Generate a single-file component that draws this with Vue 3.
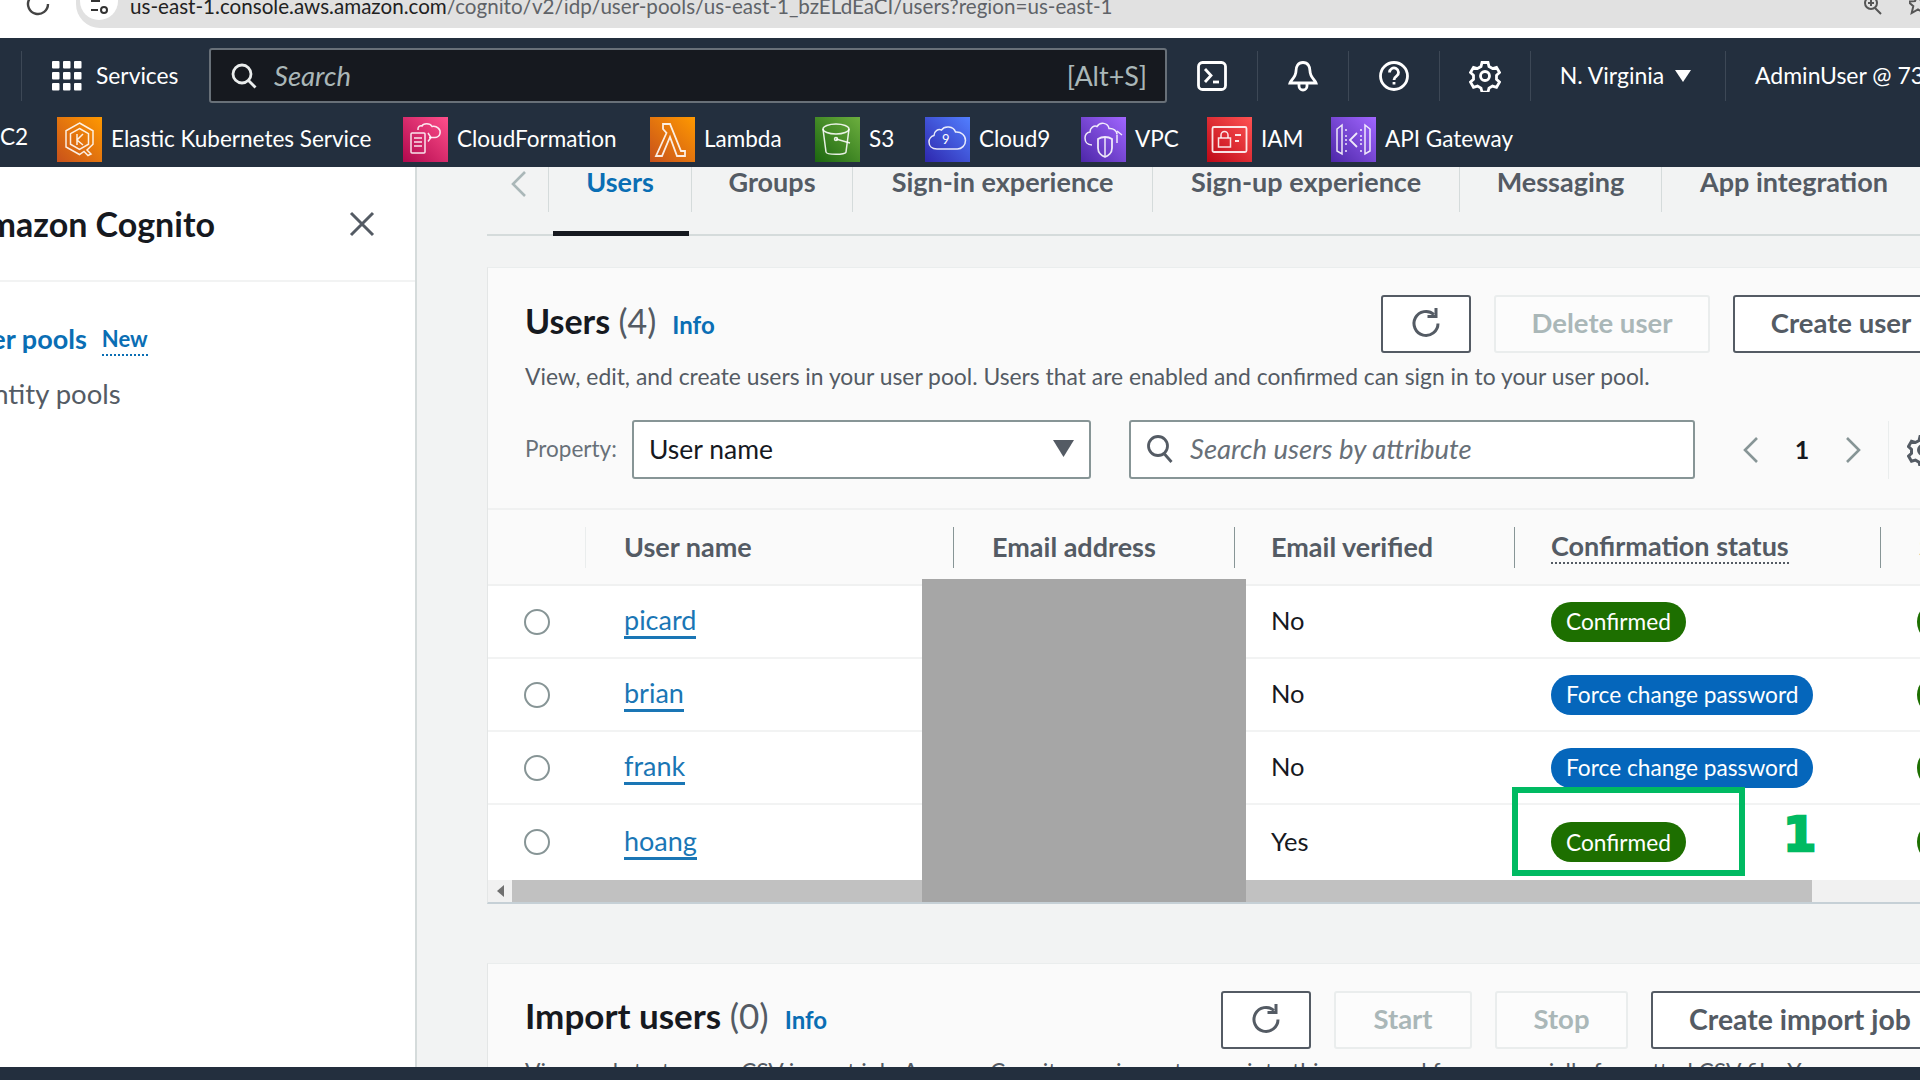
<script setup>
const services = [
  { name: 'Elastic Kubernetes Service', w: 346, c1: '#c8511b', c2: '#ff9900', id: 'eks' },
  { name: 'CloudFormation', w: 247, c1: '#b0084d', c2: '#ff4f8b', id: 'cf' },
  { name: 'Lambda', w: 165, c1: '#c8511b', c2: '#ff9900', id: 'lambda' },
  { name: 'S3', w: 110, c1: '#1b660f', c2: '#6cae3e', id: 's3' },
  { name: 'Cloud9', w: 156, c1: '#2e27ad', c2: '#527fff', id: 'c9' },
  { name: 'VPC', w: 126, c1: '#4d27a8', c2: '#a166ff', id: 'vpc' },
  { name: 'IAM', w: 124, c1: '#bd0816', c2: '#ff5252', id: 'iam' },
  { name: 'API Gateway', w: 180, c1: '#4d27a8', c2: '#a166ff', id: 'api' }
]
const tabs = [
  { name: 'Users', w: 143, active: true },
  { name: 'Groups', w: 161 },
  { name: 'Sign-in experience', w: 300 },
  { name: 'Sign-up experience', w: 307 },
  { name: 'Messaging', w: 202 },
  { name: 'App integration', w: 264 }
]
const users = [
  { name: 'picard', verified: 'No', status: 'Confirmed', kind: 'green' },
  { name: 'brian', verified: 'No', status: 'Force change password', kind: 'blue' },
  { name: 'frank', verified: 'No', status: 'Force change password', kind: 'blue' },
  { name: 'hoang', verified: 'Yes', status: 'Confirmed', kind: 'green' }
]
</script>

<template>
  <div class="page">
    <div class="chrome">
      <svg class="reload" width="24" height="24" viewBox="0 0 24 24" fill="none" stroke="#444" stroke-width="2.4">
        <path d="M22 12a10 10 0 1 1-3.500-7.600" />
        <path d="M20 -3v8h-7" />
      </svg>
      <div class="address">
        <span class="site-ic">
          <svg width="22" height="16" viewBox="0 0 22 16" fill="none" stroke="#333" stroke-width="2">
            <path d="M3 1h9M3 10h7" />
            <circle cx="16" cy="10" r="3" />
          </svg>
        </span>
        <span class="url"><span class="url-host">us-east-1.console.aws.amazon.com</span>/cognito/v2/idp/user-pools/us-east-1_bzELdEaCI/users?region=us-east-1</span>
        <svg class="zoom-ic" width="22" height="16" viewBox="0 0 22 16" fill="none" stroke="#555" stroke-width="2">
          <circle cx="9" cy="3" r="6" /><path d="M13 8l6 6M6 3h6M9 0v6" />
        </svg>
        <svg class="star-ic" width="18" height="16" viewBox="0 0 18 16" fill="none" stroke="#555" stroke-width="2">
          <path d="M9 -6l3 7 7 .6-5.300 4.600 1.600 6.800L9 9.400 2.700 13l1.600-6.800L-1 1.600 6 1z" />
        </svg>
      </div>
    </div>

    <header class="nav">
      <div class="nav-top">
        <span class="nav-sep"></span>
        <svg class="grid-ic" width="30" height="30" viewBox="0 0 30 30" fill="#fff">
          <rect x="0" y="0" width="7.500" height="7.500" rx="1" /><rect x="11" y="0" width="7.500" height="7.500" rx="1" /><rect x="22" y="0" width="7.500" height="7.500" rx="1" />
          <rect x="0" y="11" width="7.500" height="7.500" rx="1" /><rect x="11" y="11" width="7.500" height="7.500" rx="1" /><rect x="22" y="11" width="7.500" height="7.500" rx="1" />
          <rect x="0" y="22" width="7.500" height="7.500" rx="1" /><rect x="11" y="22" width="7.500" height="7.500" rx="1" /><rect x="22" y="22" width="7.500" height="7.500" rx="1" />
        </svg>
        <span class="services">Services</span>
        <div class="nav-search">
          <svg width="28" height="28" viewBox="0 0 28 28" fill="none" stroke="#eaeded" stroke-width="2.800">
            <circle cx="12" cy="12" r="9" /><path d="M18.500 18.500l7 7" />
          </svg>
          <span class="nav-search-text">Search</span>
          <span class="nav-shortcut">[Alt+S]</span>
        </div>
        <div class="tool">
          <svg width="30" height="30" viewBox="0 0 30 30" fill="none" stroke="#fff" stroke-width="2.800">
            <rect x="1.500" y="1.500" width="27" height="27" rx="4" /><path d="M8 8l6 6.500-6 6.500" /><path d="M16 21h6" />
          </svg>
        </div>
        <div class="tool">
          <svg width="30" height="32" viewBox="0 0 30 32" fill="none" stroke="#fff" stroke-width="2.800">
            <path d="M15 2.500c-5 0-7 4-7 8.500 0 6-5 9-6 12h26c-1-3-6-6-6-12 0-4.500-2-8.500-7-8.500z" /><path d="M11 23v3a4 4 0 0 0 8 0v-3" />
          </svg>
        </div>
        <div class="tool">
          <svg width="30" height="30" viewBox="0 0 30 30" fill="none" stroke="#fff" stroke-width="2.800">
            <circle cx="15" cy="15" r="13.500" /><path d="M10.500 11.500a4.500 4.500 0 1 1 7 3.700c-1.700 1.200-2.500 2-2.500 3.800" /><path d="M15 21v2.500" />
          </svg>
        </div>
        <div class="tool">
          <svg width="32" height="32" viewBox="0 0 32 32" fill="none" stroke="#fff" stroke-width="2.800">
            <circle cx="16" cy="16" r="4.500" />
            <path d="M13 2.500h6l1 4 3.500 2 4-1.200 3 5.200-3 2.800v4l3 2.800-3 5.200-4-1.200-3.500 2-1 4h-6l-1-4-3.500-2-4 1.200-3-5.200 3-2.800v-4l-3-2.800 3-5.200 4 1.200 3.500-2z" />
          </svg>
        </div>
        <div class="tool region">
          <span class="nudge">N. Virginia</span>
          <svg width="16" height="12" viewBox="0 0 16 12" fill="#fff"><path d="M0 0h16L8 12z" /></svg>
        </div>
        <span class="account nudge">AdminUser @ 7382</span>
      </div>
      <div class="nav-bottom">
        <span class="fav-cut">C2</span>
        <div v-for="s in services" :key="s.id" class="fav" :style="{ width: s.w + 'px' }">
          <svg class="svc" width="45" height="45" viewBox="0 0 45 45" fill="none" stroke="#fff" stroke-opacity=".88" stroke-width="1.500">
            <defs>
              <linearGradient :id="'g-' + s.id" x1="0" y1="1" x2="1" y2="0">
                <stop offset="0" :stop-color="s.c1" /><stop offset="1" :stop-color="s.c2" />
              </linearGradient>
            </defs>
            <rect width="45" height="45" :fill="'url(#g-' + s.id + ')'" stroke="none" />
            <g v-if="s.id === 'eks'">
              <path d="M22.500 6l13.500 7.800v13.500L30 33l4 4-3 1.500-4-4-4.500 3L9 30V13.800z" />
              <path d="M22.500 11.500l9 5.200v10.500l-9 5.200-9-5.200V16.700z" />
              <path d="M20 17v11M26 17l-6 6 6 5" />
            </g>
            <g v-else-if="s.id === 'cf'">
              <rect x="8" y="16" width="14" height="20" rx="1" />
              <path d="M11 21h8M11 25h8M11 29h8" />
              <path d="M15 13v-1a3 3 0 0 1 4-3c1-3 8-3.500 10 .5 5-1 9 3 8 7-.5 2.500-3 4-5 4h-6" />
              <path d="M25 16l3 4.500-3 4" />
            </g>
            <g v-else-if="s.id === 'lambda'">
              <path d="M13 7h7l11 27h4v5h-8L20 20l-8 19H6l10.500-23L13 12z" stroke-width="1.800" />
            </g>
            <g v-else-if="s.id === 's3'">
              <ellipse cx="21" cy="12" rx="13" ry="5" />
              <path d="M8 12l3 23c.4 3 20 3 20 0l3-23" />
              <circle cx="21" cy="22" r="1.500" />
              <path d="M21 22l14 4" />
            </g>
            <g v-else-if="s.id === 'c9'">
              <path d="M12 32c-5 0-8-3-8-7 0-3.500 2.500-6 5-6.500 0-4 4-7 7.500-5.500 3-4.500 12-4 14 2 6-.5 10 3.500 10 8.500 0 5-4 8.500-8 8.500z" />
              <text x="17" y="27" class="svc-nine">9</text>
            </g>
            <g v-else-if="s.id === 'vpc'">
              <path d="M11 28c-5 0-7-3.500-7-7 0-3 2-5.500 5-6 0-4 4-7 7-5.500 3-5 11-4 12 2 4-.5 8 2 8 6" />
              <path d="M36 14l5 4M36 18v8" />
              <path d="M24 20c-4 0-7 2-7 2v9c0 5 4 8 7 9 3-1 7-4 7-9v-9s-3-2-7-2z" stroke-width="1.800" />
              <path d="M24 21v18" />
            </g>
            <g v-else-if="s.id === 'iam'">
              <rect x="5.500" y="10" width="34" height="25" rx="1.500" stroke-width="1.800" />
              <rect x="11.500" y="21" width="12" height="9" />
              <path d="M14 21v-3a3.500 3.500 0 0 1 7 0v3" />
              <path d="M28 18h6M28 24h4" stroke-width="2" />
            </g>
            <g v-else>
              <path d="M11 8L6 12v22l5 3zM34 8l5 4v22l-5 3z" />
              <path d="M15 14v-3M15 35v-3M30 14v-3M30 35v-3M15 18v10M30 18v10" stroke-dasharray="2 2" />
              <path d="M26 16l-7 7 7 7" stroke-width="1.800" />
            </g>
          </svg>
          <span class="fav-name">{{ s.name }}</span>
        </div>
      </div>
    </header>

    <div class="body">
      <aside class="side">
        <div class="side-head">
          <span class="side-title">Amazon Cognito</span>
          <svg width="26" height="26" viewBox="0 0 26 26" fill="none" stroke="#545b64" stroke-width="3">
            <path d="M2 2l22 22M24 2L2 24" />
          </svg>
        </div>
        <div class="side-links">
          <div class="side-link-row">
            <span class="side-active">User pools</span>
            <span class="side-new">New</span>
          </div>
          <div class="side-link">Identity pools</div>
        </div>
      </aside>

      <main class="main">
        <nav class="tabs">
          <div class="tab-prev">
            <svg width="18" height="28" viewBox="0 0 18 28" fill="none" stroke="#aab7b8" stroke-width="2.600"><path d="M15 2L3 14l12 12" /></svg>
          </div>
          <div v-for="t in tabs" :key="t.name" class="tab" :class="{ active: t.active }" :style="{ width: t.w + 'px' }">{{ t.name }}</div>
        </nav>

        <section class="card">
          <div class="card-pad">
            <div class="head-row">
              <div class="title-wrap">
                <h2 class="title">Users <span class="count">(4)</span></h2>
                <span class="info">Info</span>
              </div>
              <div class="actions">
                <button class="btn btn-icon">
                  <svg width="32" height="32" viewBox="0 0 32 32" fill="none" stroke="#545b64" stroke-width="3">
                    <path d="M24 6.500a12 12 0 1 0 4 9" /><path d="M26 0v8.500h-8.500" />
                  </svg>
                </button>
                <button class="btn btn-off w-delete">Delete user</button>
                <button class="btn w-create">Create user</button>
              </div>
            </div>
            <p class="desc">View, edit, and create users in your user pool. Users that are enabled and confirmed can sign in to your user pool.</p>
            <div class="filter-row">
              <span class="prop">Property:</span>
              <div class="select">
                <span>User name</span>
                <svg width="21" height="17" viewBox="0 0 21 17" fill="#545b64"><path d="M0 0h21L10.500 17z" /></svg>
              </div>
              <div class="input">
                <svg width="28" height="30" viewBox="0 0 28 30" fill="none" stroke="#545b64" stroke-width="2.800">
                  <circle cx="12" cy="12" r="9.500" /><path d="M18.500 20l7 8" />
                </svg>
                <span>Search users by attribute</span>
              </div>
              <div class="pager">
                <svg width="18" height="28" viewBox="0 0 18 28" fill="none" stroke="#879596" stroke-width="2.600"><path d="M15 2L3 14l12 12" /></svg>
                <span class="page-num">1</span>
                <svg width="18" height="28" viewBox="0 0 18 28" fill="none" stroke="#879596" stroke-width="2.600"><path d="M3 2l12 12L3 26" /></svg>
                <span class="pager-sep"></span>
                <svg width="32" height="32" viewBox="0 0 32 32" fill="none" stroke="#545b64" stroke-width="3">
                  <circle cx="16" cy="16" r="4.500" />
                  <path d="M13 2.500h6l1 4 3.500 2 4-1.200 3 5.200-3 2.800v4l3 2.800-3 5.200-4-1.200-3.500 2-1 4h-6l-1-4-3.500-2-4 1.200-3-5.200 3-2.800v-4l-3-2.800 3-5.200 4 1.200 3.500-2z" />
                </svg>
              </div>
            </div>
          </div>

          <div class="table">
            <div class="tr th-row">
              <div class="th th-blank"></div>
              <div class="th">User name</div>
              <div class="th">Email address</div>
              <div class="th">Email verified</div>
              <div class="th"><span class="dotted">Confirmation status</span></div>
              <div class="th">Status</div>
            </div>
            <div v-for="u in users" :key="u.name" class="tr td-row">
              <div class="td td-radio"><span class="radio"></span></div>
              <div class="td"><span class="user-link">{{ u.name }}</span></div>
              <div class="td"></div>
              <div class="td td-text">{{ u.verified }}</div>
              <div class="td"><span class="badge" :class="u.kind">{{ u.status }}</span></div>
              <div class="td"><span class="badge green">Enabled</span></div>
            </div>
          </div>
          <div class="hscroll">
            <span class="hscroll-btn"><svg width="8" height="12" viewBox="0 0 8 12" fill="#707070"><path d="M8 0v12L1 6z" /></svg></span>
            <span class="hscroll-thumb"></span>
          </div>
        </section>

        <section class="card card-import">
          <div class="card-pad">
            <div class="head-row">
              <div class="title-wrap">
                <h2 class="title">Import users <span class="count">(0)</span></h2>
                <span class="info">Info</span>
              </div>
              <div class="actions">
                <button class="btn btn-icon">
                  <svg width="32" height="32" viewBox="0 0 32 32" fill="none" stroke="#545b64" stroke-width="3">
                    <path d="M24 6.500a12 12 0 1 0 4 9" /><path d="M26 0v8.500h-8.500" />
                  </svg>
                </button>
                <button class="btn btn-off w-start">Start</button>
                <button class="btn btn-off w-stop">Stop</button>
                <button class="btn w-job">Create import job</button>
              </div>
            </div>
            <p class="desc desc-cut">View and start a new CSV import job. Amazon Cognito can import users into this user pool from a specially formatted CSV file. You can</p>
          </div>
        </section>
      </main>
    </div>

    <footer class="foot"></footer>

    <div class="redact"></div>
    <div class="mark-box"></div>
    <span class="mark-num">1</span>
  </div>
</template>

<style>
html, body { margin: 0; background: #f2f3f3; }
</style>

<style scoped>
.page {
  position: relative;
  width: 1920px;
  height: 1080px;
  overflow: hidden;
  display: flex;
  flex-direction: column;
  background: #f2f3f3;
  color: #16191f;
  font-family: Lato, "Noto Sans", sans-serif;
  font-size: 23px;
}
.chrome {
  flex: none;
  height: 38px;
  background: #fff;
  display: flex;
  box-sizing: border-box;
  padding-left: 26px;
}
.reload { flex: none; margin-top: -8px; }
.address {
  flex: 1;
  height: 28px;
  margin-left: 26px;
  background: #e1e1e1;
  border-radius: 0 0 0 24px;
  display: flex;
  align-items: flex-start;
  padding-left: 4px;
}
.site-ic {
  flex: none;
  width: 38px;
  height: 24px;
  margin-top: -4px;
  background: #fff;
  border-radius: 0 0 19px 19px;
  display: flex;
  justify-content: center;
  align-items: center;
}
.url {
  flex: none;
  width: 1100px;
  margin-left: 12px;
  line-height: 12px;
  font-size: 20.600px;
  color: #5f6368;
  white-space: nowrap;
}
.url-host { color: #222; }
.zoom-ic { margin-left: 632px; flex: none; }
.star-ic { margin-left: 25px; flex: none; }

.nav { flex: none; height: 129px; background: #232f3e; color: #fff; }
.nav-top {
  box-sizing: border-box;
  height: 77px;
  display: flex;
  align-items: center;
  padding: 0 0 2px 21px;
  white-space: nowrap;
}
.nav-sep { flex: none; width: 1px; height: 50px; background: #3d4856; }
.grid-ic { flex: none; margin-left: 30px; }
.services { flex: none; width: 83px; margin-left: 14px; font-size: 22.800px; padding-bottom: 2px; }
.nudge { padding-bottom: 2px; }
.nav-search {
  flex: none;
  box-sizing: border-box;
  width: 958px;
  height: 55px;
  margin-left: 30px;
  background: #16191f;
  border: 2px solid #687078;
  border-radius: 3px;
  display: flex;
  align-items: center;
  padding: 0 18px 0 19px;
  color: #aab7b8;
}
.nav-search-text { margin-left: 16px; font-style: italic; font-size: 27.500px; }
.nav-shortcut { margin-left: auto; font-size: 27px; }
.tool {
  flex: none;
  box-sizing: border-box;
  width: 91px;
  height: 50px;
  display: flex;
  align-items: center;
  justify-content: center;
  border-right: 1px solid #3d4856;
}
.region { width: 195px; gap: 11px; padding-right: 5px; font-size: 23px; }
.account { flex: none; margin-left: 29px; font-size: 23px; }
.nav-bottom {
  height: 52px;
  display: flex;
  align-items: flex-start;
  white-space: nowrap;
}
.fav-cut { flex: none; width: 57px; font-size: 22.600px; line-height: 42px; margin-top: 1px; }
.fav { flex: none; display: flex; align-items: center; height: 45px; margin-top: 2px; gap: 9px; }
.fav-name { font-size: 22.500px; padding-bottom: 2px; }
.svc { flex: none; }
.svc-nine { font-size: 13px; fill: #fff; stroke: none; font-family: Lato, sans-serif; }

.body { flex: 1; min-height: 0; display: flex; overflow: hidden; }
.side {
  flex: none;
  box-sizing: content-box;
  width: 415px;
  background: #fff;
  border-right: 2px solid #d5dbdb;
}
.side-head {
  box-sizing: border-box;
  height: 115px;
  border-bottom: 2px solid #f2f3f3;
  display: flex;
  align-items: center;
  white-space: nowrap;
}
.side-title {
  flex: none;
  width: 250px;
  margin-left: -36px;
  margin-right: 135px;
  font-size: 34px;
  font-weight: 700;
}
.side-links { padding-top: 36px; white-space: nowrap; }
.side-link-row { display: flex; align-items: center; height: 40px; margin-left: -40px; }
.side-active { font-weight: 700; color: #0a6eb4; font-size: 27px; }
.side-new {
  margin-left: 15px;
  margin-top: 4px;
  font-weight: 700;
  color: #0a6eb4;
  font-size: 22px;
  padding-bottom: 2px;
  border-bottom: 2px dotted #0a6eb4;
}
.side-link { margin-top: 19px; margin-left: -44px; color: #545b64; font-size: 27.500px; }

.main { flex: 1; min-width: 0; padding-left: 70px; overflow: hidden; }
.tabs {
  box-sizing: border-box;
  width: 1500px;
  height: 69px;
  display: flex;
  align-items: flex-start;
  border-bottom: 2px solid #d5dbdb;
  white-space: nowrap;
}
.tab-prev {
  flex: none;
  box-sizing: border-box;
  width: 62px;
  height: 45px;
  border-right: 1px solid #d5dbdb;
  padding-left: 23px;
  padding-top: 3px;
}
.tab {
  position: relative;
  flex: none;
  box-sizing: border-box;
  height: 45px;
  display: flex;
  align-items: center;
  justify-content: center;
  border-right: 1px solid #d5dbdb;
  padding-bottom: 16px;
  font-size: 27px;
  font-weight: 700;
  color: #545b64;
}
.tab:last-child { border-right: none; }
.tab.active { color: #0a6eb4; }
.tab.active::after {
  content: "";
  position: absolute;
  left: 4px;
  right: 2px;
  top: 64px;
  height: 5px;
  background: #16191f;
}
.card {
  box-sizing: border-box;
  width: 1500px;
  margin-top: 31px;
  background: #fafafa;
  border-left: 1px solid #e4e6e6;
  border-top: 1px solid #eaeded;
  border-bottom: 2px solid #c6d0d6;
}
.card-import { margin-top: 59px; border-bottom: none; }
.card-pad { padding: 27px 38px 0 37px; }
.head-row { display: flex; justify-content: space-between; align-items: center; height: 58px; }
.title-wrap { display: flex; align-items: baseline; white-space: nowrap; margin-bottom: 8px; }
.title { margin: 0; font-size: 34px; font-weight: 700; }
.card-import .title { font-size: 35px; }
.card-import .title-wrap { margin-bottom: 10px; }
.count { font-weight: 400; color: #545b64; }
.info { margin-left: 16px; font-size: 24px; font-weight: 700; color: #0a6eb4; }
.actions { display: flex; gap: 23px; }
.btn {
  box-sizing: border-box;
  height: 58px;
  background: #fff;
  border: 2px solid #545b64;
  border-radius: 3px;
  font: 700 27.500px Lato, "Noto Sans", sans-serif;
  color: #545b64;
  padding: 0 0 3px;
  display: flex;
  align-items: center;
  justify-content: center;
}
.btn-icon { width: 90px; padding: 0; }
.btn-off { border-color: #eaeded; color: #aab7b8; background: #fcfcfc; }
.w-delete { width: 216px; }
.w-create { width: 216px; }
.w-start { width: 138px; }
.w-stop { width: 133px; }
.w-job { width: 298px; font-size: 28.400px; }
.desc {
  margin: 9px 0 0;
  font-size: 22.850px;
  line-height: 28px;
  color: #545b64;
  white-space: nowrap;
}
.desc-cut { margin-top: 8px; }
.filter-row { display: flex; align-items: center; margin-top: 30px; height: 59px; }
.prop { flex: none; width: 107px; color: #687078; font-size: 22.500px; padding-bottom: 2px; }
.select, .input {
  flex: none;
  box-sizing: border-box;
  height: 59px;
  background: #fff;
  border: 2px solid #879596;
  border-radius: 3px;
  display: flex;
  align-items: center;
  padding-bottom: 2px;
}
.select { width: 459px; padding-left: 15px; padding-right: 15px; justify-content: space-between; font-size: 26.500px; }
.input { width: 566px; margin-left: 38px; padding-left: 15px; gap: 16px; color: #687078; font-style: italic; font-size: 27.500px; }
.pager { flex: none; display: flex; align-items: center; margin-left: 47px; }
.page-num { width: 84px; text-align: center; font-weight: 700; font-size: 25px; padding-bottom: 2px; }
.pager-sep { width: 1px; height: 58px; background: #eaeded; margin: 0 18px 0 26px; }
.table { margin-top: 29px; }
.tr {
  display: grid;
  grid-template-columns: 97px 368px 281px 280px 366px 107px;
  white-space: nowrap;
}
.th-row {
  box-sizing: border-box;
  height: 78px;
  align-items: center;
  border-top: 2px solid #f0f1f1;
  border-bottom: 2px solid #f0f1f1;
}
.th {
  box-sizing: border-box;
  height: 41px;
  display: flex;
  align-items: center;
  padding-left: 38px;
  padding-bottom: 2px;
  border-left: 1px solid #879596;
  font-size: 27px;
  font-weight: 700;
  color: #545b64;
}
.th-blank { border-left: none; }
.th:nth-child(2) { border-left-color: #eaeded; }
.th:nth-child(4), .th:nth-child(5) { padding-left: 36px; }
.dotted { border-bottom: 2px dotted #545b64; padding-bottom: 0; }
.td-row {
  box-sizing: border-box;
  height: 73px;
  align-items: center;
  background: #fff;
  border-bottom: 2px solid #f2f3f3;
}
.td-row:last-of-type { height: 75px; border-bottom: none; padding-bottom: 1px; }
.td { padding-left: 37px; font-size: 25.500px; }
.td-text { padding-bottom: 3px; }
.td-radio { padding-left: 36px; display: flex; }
.radio {
  box-sizing: border-box;
  width: 26px;
  height: 26px;
  border-radius: 50%;
  border: 2px solid #879596;
  background: #fff;
}
.user-link {
  position: relative;
  top: -2px;
  margin-left: 2px;
  color: #1a76b5;
  font-size: 27px;
  border-bottom: 3px solid #1a76b5;
}
.badge {
  display: inline-flex;
  align-items: center;
  height: 40px;
  padding: 0 15px;
  border-radius: 20px;
  color: #fff;
  font-size: 22.700px;
}
.badge.green { background: #1d6f00; }
.badge.blue { background: #0566bb; }
.hscroll { height: 22px; display: flex; background: #f1f1f1; }
.hscroll-btn { flex: none; width: 24px; display: flex; align-items: center; justify-content: center; }
.hscroll-thumb { flex: none; width: 1300px; background: #c1c1c1; }

.foot { flex: none; height: 13px; background: #232f3e; }

.redact {
  position: absolute;
  left: 922px;
  top: 579px;
  width: 324px;
  height: 323px;
  background: #a6a6a6;
}
.mark-box {
  position: absolute;
  box-sizing: border-box;
  left: 1512px;
  top: 787px;
  width: 233px;
  height: 89px;
  border: 6px solid #00ba62;
}
.mark-num {
  position: absolute;
  left: 1783px;
  top: 804px;
  font: 700 48px/60px "DejaVu Sans", sans-serif;
  color: #00ba62;
  -webkit-text-stroke: 2.500px #00ba62;
}
</style>
